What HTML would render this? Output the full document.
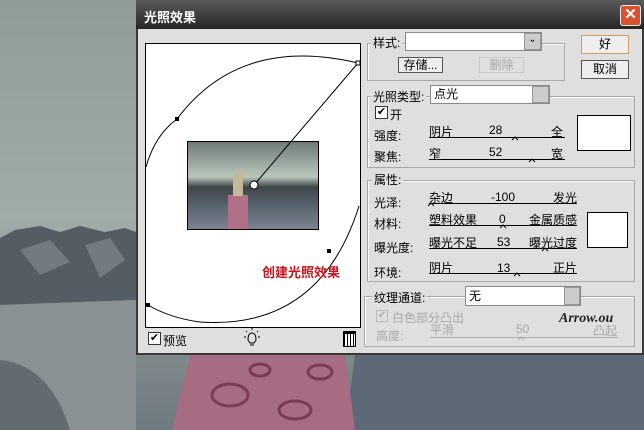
<!DOCTYPE html>
<html><head><meta charset="utf-8"><style>
*{margin:0;padding:0;box-sizing:border-box}
body{width:644px;height:430px;overflow:hidden;position:relative;font-family:"Liberation Sans","Noto Sans CJK SC",sans-serif;font-size:12px;color:#000}
.a{position:absolute;white-space:nowrap}
.grp{position:absolute;border:1px solid #a8a8a8;box-shadow:1px 1px 0 #fff inset}
.lab{position:absolute;background:#dfdfdf;padding:0 2px;font-size:12px}
.sl{position:absolute;height:1px;background:#000}
.btn{position:absolute;border:1px solid #555;background:#eee;text-align:center;font-size:12px}
.dim{color:#a8a8a8}
.c{position:absolute;width:7px;height:4px}
</style></head><body>
<div class="a" style="left:0;top:0;width:644px;height:430px;background:linear-gradient(#8f9c9a 0,#a0acaa 220px,#8a9496 300px,#7e878a 360px,#6f7a80 430px)"></div>
<svg class="a" style="left:0;top:0" width="644" height="430">
<path d="M0 238 L15 230 L40 226 L60 232 L80 226 L105 232 L125 228 L136 232 L136 300 L0 305Z" fill="#545c64"/>
<path d="M20 250 L50 240 L70 262 L40 275Z M85 245 L110 238 L125 260 L100 278Z" fill="#727b81"/>
<path d="M0 305 L136 300 L136 430 L0 430Z" fill="#899195"/>
<path d="M0 360 Q50 365 70 430 L0 430Z" fill="#626b70"/>
<path d="M355 355 L644 355 L644 430 L345 430Z" fill="#5d6976"/>
<path d="M190 355 L345 355 L355 430 L172 430Z" fill="#a66c84"/>
<g fill="none" stroke="#7a3b55" stroke-width="3"><ellipse cx="230" cy="395" rx="18" ry="11"/><ellipse cx="295" cy="410" rx="16" ry="9"/><ellipse cx="320" cy="372" rx="12" ry="7"/><ellipse cx="260" cy="370" rx="10" ry="6"/></g>
</svg>
<!-- dialog -->
<div class="a" style="left:136px;top:0;width:508px;height:355px;background:#dfdfdf;border:2px solid #3a3a3a;border-top:none"></div>
<div class="a" style="left:136px;top:0;width:508px;height:29px;background:linear-gradient(#5a5a5a,#262626);"></div>
<div class="a" style="left:144px;top:7px;color:#fff;font-weight:bold;font-size:13px">光照效果</div>
<div class="a" style="left:620px;top:5px;width:21px;height:21px;background:#d8522f;border:1px solid #eee;border-radius:3px;color:#fff;font-weight:bold;font-size:15px;text-align:center;line-height:18px">✕</div>
<!-- preview -->
<div class="a" style="left:145px;top:43px;width:216px;height:285px;background:#fff;border:1px solid #000"></div>
<div class="a" style="left:187px;top:141px;width:132px;height:89px;border:1px solid #000;background:linear-gradient(#6e7b78,#b9c7bb 40%,#3d4548 52%,#4a5058 60%,#5a6670 75%,#7b8290)"></div>
<div class="a" style="left:228px;top:195px;width:20px;height:34px;background:#b17088"></div>
<div class="a" style="left:233px;top:172px;width:10px;height:24px;background:#c7b79a"></div>
<svg class="a" style="left:0;top:0" width="644" height="430">
<g fill="none" stroke="#000" stroke-width="1">
<path d="M146 167 Q155 135 177 119 Q240 35 358 63"/>
<path d="M358 63 L254 185"/>
<path d="M359 206 Q320 330 200 322 Q170 318 148 305"/>
</g>
<rect x="175" y="117" width="4" height="4"/><rect x="327" y="249" width="4" height="4"/><rect x="146" y="303" width="4" height="4"/>
<rect x="356" y="61" width="4" height="4" fill="#fff" stroke="#000"/>
<circle cx="254" cy="185" r="4" fill="#fff" stroke="#000"/>
<g fill="none" stroke="#000" stroke-width="1">
<path d="M248 340 Q248 333 252 333 Q256 333 256 340 L254 343 L250 343Z"/>
<path d="M250 345 L254 345 M244 337 L246 337 M258 337 L260 337 M246 331 L247 332 M258 331 L257 332 M252 328 L252 330"/>
</g>
<g fill="none" stroke="#000">
<path d="M512 140 L515 137 L518 140"/><path d="M529 162 L532 159 L535 162"/>
<path d="M428 206 L431 203 L434 206"/><path d="M500 228 L503 225 L506 228"/><path d="M542 251 L545 248 L548 251"/><path d="M514 276 L517 273 L520 276"/>
<path d="M527 302 L531 298 L535 302" stroke="#333"/>
</g>
<path d="M518 340 L521 337 L524 340" fill="none" stroke="#aaa"/>
</svg>
<div class="a" style="left:262px;top:262px;color:#c8141e;font-weight:bold;font-size:13px">创建光照效果</div>
<div class="a" style="left:148px;top:332px;width:13px;height:13px;border:1px solid #333;background:#fff;font-size:11px;line-height:11px;text-align:center">✔</div>
<div class="a" style="left:163px;top:332px">预览</div>
<div class="a" style="left:343px;top:331px;width:13px;height:16px;border:1px solid #000;border-top:3px solid #000;background:repeating-linear-gradient(90deg,#000 0 1px,#fff 1px 3px)"></div>
<!-- style group -->
<div class="grp" style="left:367px;top:43px;width:198px;height:38px"></div>
<div class="lab" style="left:371px;top:34px">样式:</div>
<div class="a" style="left:405px;top:32px;width:137px;height:19px;background:#fff;border:1px solid #888"></div>
<div class="a" style="left:524px;top:33px;width:17px;height:17px;background:#ccc;border:1px solid #999;text-align:center;font-size:10px">⌄</div>
<div class="btn" style="left:398px;top:57px;width:45px;height:16px;line-height:14px">存储...</div>
<div class="a dim" style="left:479px;top:57px;width:45px;height:16px;border:1px solid #c8c8c8;text-align:center;line-height:14px">删除</div>
<div class="btn" style="left:581px;top:35px;width:48px;height:19px;border-color:#d89a5a;line-height:17px">好</div>
<div class="btn" style="left:581px;top:60px;width:48px;height:19px;line-height:17px">取消</div>
<!-- light type -->
<div class="grp" style="left:367px;top:96px;width:268px;height:72px"></div>
<div class="lab" style="left:371px;top:88px">光照类型:</div>
<div class="a" style="left:430px;top:85px;width:120px;height:19px;background:#fff;border:1px solid #888;padding-left:3px;line-height:17px">点光</div>
<div class="a" style="left:532px;top:86px;width:17px;height:17px;background:#ccc;border:1px solid #999"></div>
<div class="a" style="left:375px;top:106px;width:13px;height:13px;border:1px solid #333;background:#fff;font-size:11px;line-height:11px;text-align:center">✔</div>
<div class="a" style="left:390px;top:106px">开</div>
<div class="a" style="left:374px;top:127px">强度:</div>
<div class="a" style="left:429px;top:123px">阴片</div><div class="a" style="left:489px;top:123px">28</div><div class="a" style="left:551px;top:123px">全</div>
<div class="sl" style="left:429px;top:137px;width:136px"></div>
<div class="a" style="left:374px;top:148px">聚焦:</div>
<div class="a" style="left:429px;top:145px">窄</div><div class="a" style="left:489px;top:145px">52</div><div class="a" style="left:551px;top:145px">宽</div>
<div class="sl" style="left:429px;top:159px;width:136px"></div>
<div class="a" style="left:577px;top:115px;width:54px;height:36px;background:#fff;border:1px solid #000"></div>
<!-- properties -->
<div class="grp" style="left:367px;top:180px;width:268px;height:102px"></div>
<div class="lab" style="left:372px;top:171px">属性:</div>
<div class="a" style="left:374px;top:194px">光泽:</div>
<div class="a" style="left:429px;top:189px">杂边</div><div class="a" style="left:491px;top:190px">-100</div><div class="a" style="left:553px;top:189px">发光</div>
<div class="sl" style="left:429px;top:203px;width:148px"></div>
<div class="a" style="left:374px;top:215px">材料:</div>
<div class="a" style="left:429px;top:211px">塑料效果</div><div class="a" style="left:499px;top:212px">0</div><div class="a" style="left:529px;top:211px">金属质感</div>
<div class="sl" style="left:429px;top:225px;width:148px"></div>
<div class="a" style="left:374px;top:239px">曝光度:</div>
<div class="a" style="left:429px;top:234px">曝光不足</div><div class="a" style="left:497px;top:235px">53</div><div class="a" style="left:529px;top:234px">曝光过度</div>
<div class="sl" style="left:429px;top:248px;width:148px"></div>
<div class="a" style="left:374px;top:264px">环境:</div>
<div class="a" style="left:429px;top:259px">阴片</div><div class="a" style="left:497px;top:261px">13</div><div class="a" style="left:553px;top:259px">正片</div>
<div class="sl" style="left:429px;top:273px;width:148px"></div>
<div class="a" style="left:587px;top:212px;width:41px;height:36px;background:#fff;border:1px solid #000"></div>
<!-- texture -->
<div class="grp" style="left:364px;top:296px;width:271px;height:51px"></div>
<div class="lab" style="left:372px;top:289px">纹理通道:</div>
<div class="a" style="left:465px;top:286px;width:116px;height:20px;background:#fff;border:1px solid #888;padding-left:3px;line-height:18px">无</div>
<div class="a" style="left:564px;top:287px;width:16px;height:18px;background:#ccc;border:1px solid #999"></div>
<div class="a dim" style="left:376px;top:310px;width:12px;height:12px;border:1px solid #bbb;font-size:10px;line-height:10px;text-align:center">✔</div>
<div class="a dim" style="left:392px;top:309px">白色部分凸出</div>
<div class="a dim" style="left:376px;top:327px">高度:</div>
<div class="a dim" style="left:430px;top:321px">平滑</div><div class="a dim" style="left:516px;top:322px">50</div><div class="a dim" style="left:593px;top:322px">凸起</div>
<div class="sl" style="left:430px;top:337px;width:188px;background:#aaa"></div>
<div class="a" style="left:559px;top:311px;font-family:'Liberation Serif',serif;font-style:italic;font-weight:bold;font-size:14px;color:#222">Arrow.ou</div>
</body></html>
